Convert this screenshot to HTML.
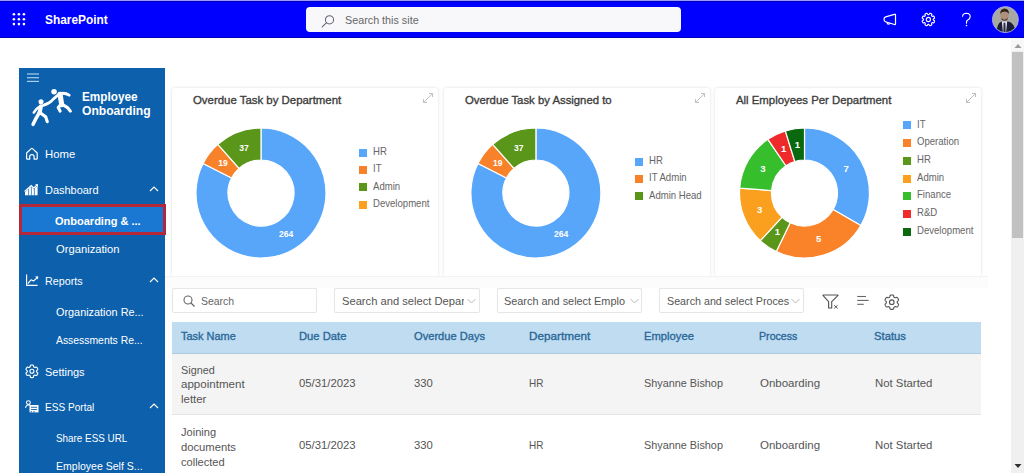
<!DOCTYPE html>
<html><head><meta charset="utf-8">
<style>
*{box-sizing:border-box;margin:0;padding:0}
html,body{width:1024px;height:473px;overflow:hidden;background:#fff;font-family:"Liberation Sans", sans-serif}
.abs{position:absolute}
.t{position:absolute;white-space:nowrap;line-height:1;transform-origin:0 0}
#topline{left:0;top:0;width:1024px;height:1px;background:#9a9af8}
#hdr{left:0;top:1px;width:1024px;height:37px;background:#0000ff;border-top:1px solid #0000c0;border-bottom:1px solid #0000b8}
.dot{position:absolute;width:2.5px;height:2.5px;background:#fff;border-radius:50%}
#search{left:306px;top:7px;width:375px;height:25px;background:#f8f8fa;border-radius:4px}
#side{left:19px;top:68px;width:146px;height:405px;background:#0c60ac}
.card{position:absolute;top:88px;width:266px;height:188px;background:#fff;box-shadow:0 0 3px rgba(0,0,0,.15);border-radius:2px}
.card svg text{font-family:"Liberation Sans", sans-serif;font-size:9.6px;font-weight:bold;fill:#fff;text-anchor:middle}
.sq{position:absolute;width:8px;height:8px}
#band{left:165px;top:276px;width:823px;height:12px;background:#fcfcfc;border-top:1px solid #f2f2f2}
.inp{position:absolute;top:288px;height:25px;border:1px solid #e6e6e6;background:#fff;border-radius:2px;box-shadow:0 0 1px rgba(0,0,0,.06)}
#thead{left:172px;top:322px;width:809px;height:32px;background:#bfdcf1;border-bottom:1px solid #acc9e0}
.row{position:absolute;left:172px;width:809px}
#sb{left:1011px;top:38px;width:13px;height:435px;background:#f0f0f0}
#thumb{left:1012px;top:52px;width:11px;height:186px;background:#c1c1c1}
</style></head><body>
<div class="abs" id="topline"></div>
<div class="abs" id="hdr"></div>
<svg class="abs" style="left:8px;top:8px" width="22" height="22" viewBox="8 8 22 22"><circle cx="13.90" cy="14.30" r="1.3" fill="#fff"/><circle cx="13.90" cy="19.20" r="1.3" fill="#fff"/><circle cx="13.90" cy="24.10" r="1.3" fill="#fff"/><circle cx="18.90" cy="14.30" r="1.3" fill="#fff"/><circle cx="18.90" cy="19.20" r="1.3" fill="#fff"/><circle cx="18.90" cy="24.10" r="1.3" fill="#fff"/><circle cx="23.90" cy="14.30" r="1.3" fill="#fff"/><circle cx="23.90" cy="19.20" r="1.3" fill="#fff"/><circle cx="23.90" cy="24.10" r="1.3" fill="#fff"/></svg><div class="t" style="left:44.7px;top:13.9px;font-size:12.8px;font-weight:bold;color:#fff;transform:scaleX(0.930);">SharePoint</div><div class="abs" id="search">
<svg class="abs" style="left:14px;top:7px" width="16" height="14" viewBox="0 0 16 14"><circle cx="9.5" cy="5.8" r="4.1" fill="none" stroke="#667" stroke-width="1.05"/><line x1="6.6" y1="8.7" x2="2.2" y2="12.8" stroke="#667" stroke-width="1.15" stroke-linecap="round"/></svg>
</div>
<div class="t" style="left:344.6px;top:14.6px;font-size:11px;color:#666;transform:scaleX(0.979);">Search this site</div><svg class="abs" style="left:880px;top:11px" width="20" height="17" viewBox="880 11 20 17">
<path d="M885.6 16.9 L894.4 14.3 Q895.5 14 895.5 15.1 L895.5 23.7 Q895.5 24.8 894.4 24.5 L885.6 21.7 Q884 21.2 884 19.3 Q884 17.4 885.6 16.9 Z" fill="none" stroke="#fff" stroke-width="1.2" stroke-linejoin="round"/>
<path d="M886.9 22.1 Q887 24.1 888.6 24.1 Q890 24.1 890.2 23.1" fill="none" stroke="#fff" stroke-width="1.1"/>
</svg>
<svg class="abs" style="left:918px;top:9px" width="21" height="21" viewBox="918 9 21 21"><path d="M928.40,14.58 L928.55,14.58 L928.71,14.58 L928.87,14.54 L929.04,14.41 L929.26,14.05 L929.53,13.57 L929.77,13.35 L929.99,13.33 L930.18,13.36 L930.38,13.41 L930.57,13.48 L930.76,13.55 L930.94,13.63 L931.12,13.71 L931.30,13.80 L931.48,13.90 L931.65,14.01 L931.78,14.18 L931.79,14.51 L931.64,15.04 L931.54,15.45 L931.57,15.66 L931.66,15.80 L931.77,15.91 L931.88,16.02 L931.99,16.13 L932.10,16.24 L932.24,16.33 L932.45,16.36 L932.86,16.26 L933.39,16.11 L933.72,16.12 L933.89,16.25 L934.00,16.42 L934.10,16.60 L934.19,16.78 L934.27,16.96 L934.35,17.14 L934.42,17.33 L934.49,17.52 L934.54,17.72 L934.57,17.91 L934.55,18.13 L934.33,18.37 L933.85,18.64 L933.49,18.86 L933.36,19.03 L933.32,19.19 L933.32,19.35 L933.32,19.50 L933.32,19.65 L933.32,19.81 L933.36,19.97 L933.49,20.14 L933.85,20.36 L934.33,20.63 L934.55,20.87 L934.57,21.09 L934.54,21.28 L934.49,21.48 L934.42,21.67 L934.35,21.86 L934.27,22.04 L934.19,22.22 L934.10,22.40 L934.00,22.58 L933.89,22.75 L933.72,22.88 L933.39,22.89 L932.86,22.74 L932.45,22.64 L932.24,22.67 L932.10,22.76 L931.99,22.87 L931.88,22.98 L931.77,23.09 L931.66,23.20 L931.57,23.34 L931.54,23.55 L931.64,23.96 L931.79,24.49 L931.78,24.82 L931.65,24.99 L931.48,25.10 L931.30,25.20 L931.12,25.29 L930.94,25.37 L930.76,25.45 L930.57,25.52 L930.38,25.59 L930.18,25.64 L929.99,25.67 L929.77,25.65 L929.53,25.43 L929.26,24.95 L929.04,24.59 L928.87,24.46 L928.71,24.42 L928.55,24.42 L928.40,24.42 L928.25,24.42 L928.09,24.42 L927.93,24.46 L927.76,24.59 L927.54,24.95 L927.27,25.43 L927.03,25.65 L926.81,25.67 L926.62,25.64 L926.42,25.59 L926.23,25.52 L926.04,25.45 L925.86,25.37 L925.68,25.29 L925.50,25.20 L925.32,25.10 L925.15,24.99 L925.02,24.82 L925.01,24.49 L925.16,23.96 L925.26,23.55 L925.23,23.34 L925.14,23.20 L925.03,23.09 L924.92,22.98 L924.81,22.87 L924.70,22.76 L924.56,22.67 L924.35,22.64 L923.94,22.74 L923.41,22.89 L923.08,22.88 L922.91,22.75 L922.80,22.58 L922.70,22.40 L922.61,22.22 L922.53,22.04 L922.45,21.86 L922.38,21.67 L922.31,21.48 L922.26,21.28 L922.23,21.09 L922.25,20.87 L922.47,20.63 L922.95,20.36 L923.31,20.14 L923.44,19.97 L923.48,19.81 L923.48,19.65 L923.48,19.50 L923.48,19.35 L923.48,19.19 L923.44,19.03 L923.31,18.86 L922.95,18.64 L922.47,18.37 L922.25,18.13 L922.23,17.91 L922.26,17.72 L922.31,17.52 L922.38,17.33 L922.45,17.14 L922.53,16.96 L922.61,16.78 L922.70,16.60 L922.80,16.42 L922.91,16.25 L923.08,16.12 L923.41,16.11 L923.94,16.26 L924.35,16.36 L924.56,16.33 L924.70,16.24 L924.81,16.13 L924.92,16.02 L925.03,15.91 L925.14,15.80 L925.23,15.66 L925.26,15.45 L925.16,15.04 L925.01,14.51 L925.02,14.18 L925.15,14.01 L925.32,13.90 L925.50,13.80 L925.68,13.71 L925.86,13.63 L926.04,13.55 L926.23,13.48 L926.42,13.41 L926.62,13.36 L926.81,13.33 L927.03,13.35 L927.27,13.57 L927.54,14.05 L927.76,14.41 L927.93,14.54 L928.09,14.58 L928.25,14.58 Z" fill="none" stroke="#fff" stroke-width="1.15" stroke-linejoin="round"/><circle cx="928.4" cy="19.5" r="2.1" fill="none" stroke="#fff" stroke-width="1.1"/></svg>
<svg class="abs" style="left:958px;top:10px" width="16" height="18" viewBox="958 10 16 18"><path d="M962.6 16.3 Q962.8 13.2 966.4 13.2 Q970.2 13.3 970.2 16.6 Q970.1 18.8 967.8 19.9 Q966.5 20.6 966.5 22 L966.5 23.2" fill="none" stroke="#fff" stroke-width="1.15" stroke-linecap="round"/><circle cx="966.5" cy="25.5" r="0.85" fill="#fff"/></svg>
<svg class="abs" style="left:990px;top:4px" width="31" height="31" viewBox="990 4 31 31">
<defs><clipPath id="av"><circle cx="1005.4" cy="19.6" r="13"/></clipPath></defs>
<g clip-path="url(#av)"><rect x="990" y="4" width="31" height="31" fill="#a8a8a2"/>
<path d="M996.5 33 Q997 23 1001.5 21.5 L1008 21.5 Q1014.5 22.5 1016 33 Z" fill="#1b2036"/>
<path d="M1001.8 21.2 L1007.2 21.2 L1006 33 L1003 33 Z" fill="#e4e4ea"/>
<path d="M1003.6 22.8 L1005.4 22.8 L1005.7 33 L1003.3 33 Z" fill="#2a2c44"/>
<ellipse cx="1004.5" cy="15.6" rx="4.1" ry="5.6" fill="#b08f7c"/>
<path d="M1000.2 14 Q1000 8.6 1004.6 8.4 Q1009.2 8.6 1008.9 14 Q1008 11.5 1004.6 11.4 Q1001.2 11.5 1000.2 14 Z" fill="#30261f"/>
<path d="M1001.5 17.8 Q1004.5 21.5 1007.6 17.8 L1007.6 19.5 Q1004.5 22 1001.5 19.5 Z" fill="#4a3a30"/>
</g><circle cx="1005.4" cy="19.6" r="13" fill="none" stroke="#a8a8f0" stroke-width="0.9"/></svg>
<div class="abs" id="side"><svg class="abs" style="left:8px;top:5px" width="12" height="10" viewBox="0 0 12 10"><g stroke="#a8d0f0" stroke-width="1.2"><line x1="0" y1="1" x2="12" y2="1"/><line x1="0" y1="4.7" x2="12" y2="4.7"/><line x1="0" y1="8.4" x2="12" y2="8.4"/></g></svg>
<svg class="abs" style="left:9px;top:18px" width="48" height="44" viewBox="0 0 516 473">
<g fill="none" stroke="#fff" stroke-linecap="round" stroke-linejoin="round">
<circle cx="280" cy="62" r="30" fill="#fff" stroke="none"/>
<circle cx="140" cy="170" r="27" fill="#fff" stroke="none"/>
<path d="M345 90 L362 200" stroke-width="55"/>
<path d="M335 82 Q400 68 442 98" stroke-width="32"/>
<path d="M322 98 Q275 135 245 168 Q215 190 180 202" stroke-width="30"/>
<path d="M352 200 L325 232 L345 270" stroke-width="34"/>
<path d="M372 200 L425 232 L455 270" stroke-width="34"/>
<path d="M138 220 L125 290" stroke-width="45"/>
<path d="M145 215 Q175 205 205 190" stroke-width="30"/>
<path d="M118 228 Q82 248 62 285" stroke-width="28"/>
<path d="M120 290 L85 350 L55 412" stroke-width="38"/>
<path d="M135 292 L190 330 L207 383" stroke-width="34"/>
</g></svg>
</div><div class="t" style="left:81.6px;top:90.8px;font-size:12.5px;font-weight:bold;color:#fff;transform:scaleX(0.941);">Employee</div><div class="t" style="left:81.6px;top:105.3px;font-size:12.5px;font-weight:bold;color:#fff;transform:scaleX(0.969);">Onboarding</div><div class="abs" style="left:19px;top:204px;width:147px;height:31px;background:#1b78d2;border:3px solid #b3283a"></div><div class="t" style="left:44.6px;top:149.2px;font-size:11.5px;color:#fff;transform:scaleX(0.984);">Home</div><div class="t" style="left:44.6px;top:184.8px;font-size:11.5px;color:#fff;transform:scaleX(0.953);">Dashboard</div><svg class="abs" style="left:149px;top:186.1px" width="10" height="6" viewBox="0 0 10 6"><path d="M1 5 L5 1 L9 5" fill="none" stroke="#fff" stroke-width="1.1"/></svg><div class="t" style="left:55.2px;top:215.7px;font-size:11.5px;font-weight:bold;color:#fff;transform:scaleX(0.957);">Onboarding &amp; ...</div><div class="t" style="left:55.6px;top:243.9px;font-size:11.5px;color:#fff;transform:scaleX(0.975);">Organization</div><div class="t" style="left:44.6px;top:275.6px;font-size:11.5px;color:#fff;transform:scaleX(0.933);">Reports</div><svg class="abs" style="left:149px;top:276.9px" width="10" height="6" viewBox="0 0 10 6"><path d="M1 5 L5 1 L9 5" fill="none" stroke="#fff" stroke-width="1.1"/></svg><div class="t" style="left:55.6px;top:307.2px;font-size:11.5px;color:#fff;transform:scaleX(0.945);">Organization Re...</div><div class="t" style="left:55.6px;top:335.2px;font-size:11.5px;color:#fff;transform:scaleX(0.903);">Assessments Re...</div><div class="t" style="left:44.6px;top:366.8px;font-size:11.5px;color:#fff;transform:scaleX(0.953);">Settings</div><div class="t" style="left:44.6px;top:401.6px;font-size:11.5px;color:#fff;transform:scaleX(0.876);">ESS Portal</div><svg class="abs" style="left:149px;top:402.9px" width="10" height="6" viewBox="0 0 10 6"><path d="M1 5 L5 1 L9 5" fill="none" stroke="#fff" stroke-width="1.1"/></svg><div class="t" style="left:55.6px;top:433.2px;font-size:11.5px;color:#fff;transform:scaleX(0.858);">Share ESS URL</div><div class="t" style="left:55.6px;top:461.2px;font-size:11.5px;color:#fff;transform:scaleX(0.915);">Employee Self S...</div><svg class="abs" style="left:22px;top:144px" width="20" height="20" viewBox="22 144 20 20"><path d="M26.6 153.6 Q26.6 153 27.1 152.5 L31.3 148.6 Q31.9 148.1 32.5 148.6 L36.7 152.5 Q37.2 153 37.2 153.6 L37.2 158.4 Q37.2 159.2 36.4 159.2 L34.1 159.2 L34.1 156.6 Q34.1 154.7 31.9 154.7 Q29.7 154.7 29.7 156.6 L29.7 159.2 L27.4 159.2 Q26.6 159.2 26.6 158.4 Z" fill="none" stroke="#fff" stroke-width="1.2" stroke-linejoin="round"/></svg>
<svg class="abs" style="left:22px;top:182px" width="18" height="15" viewBox="22 182 18 15"><path d="M25 195.3 L25 192.3 L31.2 186.6 L33.8 189.2 L36.2 186.8 L37.6 186.8 L37.6 195.3 Z" fill="#fff"/><path d="M24.6 191.6 L31.2 185.6 L33.8 188 L37.4 184.6" fill="none" stroke="#fff" stroke-width="1.3"/><path d="M35 184.2 L38 184.2 L38 187.2 Z" fill="#fff"/><g stroke="#0c60ac" stroke-width="0.7"><line x1="28.6" y1="189" x2="28.6" y2="195.5"/><line x1="31.4" y1="187" x2="31.4" y2="195.5"/><line x1="34.4" y1="188" x2="34.4" y2="195.5"/></g></svg>
<svg class="abs" style="left:22px;top:270px" width="20" height="20" viewBox="22 270 20 20"><path d="M26.6 274.4 L26.6 285.3 L37.6 285.3" fill="none" stroke="#fff" stroke-width="1.15" stroke-linejoin="round"/><path d="M27.9 283.6 L31 279.8 L33.5 281 L37 277.8" fill="none" stroke="#fff" stroke-width="1.15" stroke-linejoin="round"/><path d="M35 276.6 L38.3 276.2 L37.9 279.5 Z" fill="#fff"/></svg>
<svg class="abs" style="left:22px;top:361px" width="20" height="21" viewBox="22 361 20 21"><path d="M31.90,365.00 L32.10,365.00 L32.30,365.01 L32.49,365.03 L32.69,365.07 L32.88,365.11 L33.07,365.19 L33.24,365.31 L33.38,365.53 L33.48,365.85 L33.55,366.22 L33.61,366.55 L33.69,366.78 L33.79,366.94 L33.90,367.05 L34.02,367.14 L34.14,367.22 L34.27,367.29 L34.40,367.36 L34.53,367.43 L34.68,367.47 L34.85,367.50 L35.07,367.47 L35.36,367.38 L35.71,367.24 L36.06,367.14 L36.34,367.13 L36.55,367.20 L36.72,367.31 L36.86,367.45 L36.99,367.60 L37.11,367.76 L37.22,367.92 L37.32,368.09 L37.42,368.27 L37.51,368.44 L37.60,368.62 L37.67,368.80 L37.73,368.99 L37.77,369.19 L37.77,369.39 L37.69,369.62 L37.50,369.86 L37.22,370.11 L36.94,370.34 L36.75,370.53 L36.64,370.70 L36.59,370.86 L36.57,371.01 L36.56,371.15 L36.55,371.30 L36.56,371.45 L36.57,371.59 L36.59,371.74 L36.64,371.90 L36.75,372.07 L36.94,372.26 L37.22,372.49 L37.50,372.74 L37.69,372.98 L37.77,373.21 L37.77,373.41 L37.73,373.61 L37.67,373.80 L37.60,373.98 L37.51,374.16 L37.42,374.33 L37.32,374.51 L37.22,374.68 L37.11,374.84 L36.99,375.00 L36.86,375.15 L36.72,375.29 L36.55,375.40 L36.34,375.47 L36.06,375.46 L35.71,375.36 L35.36,375.22 L35.07,375.13 L34.85,375.10 L34.68,375.13 L34.53,375.17 L34.40,375.24 L34.27,375.31 L34.14,375.38 L34.02,375.46 L33.90,375.55 L33.79,375.66 L33.69,375.82 L33.61,376.05 L33.55,376.38 L33.48,376.75 L33.38,377.07 L33.24,377.29 L33.07,377.41 L32.88,377.49 L32.69,377.53 L32.49,377.57 L32.30,377.59 L32.10,377.60 L31.90,377.60 L31.70,377.60 L31.50,377.59 L31.31,377.57 L31.11,377.53 L30.92,377.49 L30.73,377.41 L30.56,377.29 L30.42,377.07 L30.32,376.75 L30.25,376.38 L30.19,376.05 L30.11,375.82 L30.01,375.66 L29.90,375.55 L29.78,375.46 L29.66,375.38 L29.53,375.31 L29.40,375.24 L29.27,375.17 L29.12,375.13 L28.95,375.10 L28.73,375.13 L28.44,375.22 L28.09,375.36 L27.74,375.46 L27.46,375.47 L27.25,375.40 L27.08,375.29 L26.94,375.15 L26.81,375.00 L26.69,374.84 L26.58,374.68 L26.48,374.51 L26.38,374.33 L26.29,374.16 L26.20,373.98 L26.13,373.80 L26.07,373.61 L26.03,373.41 L26.03,373.21 L26.11,372.98 L26.30,372.74 L26.58,372.49 L26.86,372.26 L27.05,372.07 L27.16,371.90 L27.21,371.74 L27.23,371.59 L27.24,371.45 L27.25,371.30 L27.24,371.15 L27.23,371.01 L27.21,370.86 L27.16,370.70 L27.05,370.53 L26.86,370.34 L26.58,370.11 L26.30,369.86 L26.11,369.62 L26.03,369.39 L26.03,369.19 L26.07,368.99 L26.13,368.80 L26.20,368.62 L26.29,368.44 L26.38,368.27 L26.48,368.09 L26.58,367.92 L26.69,367.76 L26.81,367.60 L26.94,367.45 L27.08,367.31 L27.25,367.20 L27.46,367.13 L27.74,367.14 L28.09,367.24 L28.44,367.38 L28.73,367.47 L28.95,367.50 L29.12,367.47 L29.27,367.43 L29.40,367.36 L29.53,367.29 L29.66,367.22 L29.78,367.14 L29.90,367.05 L30.01,366.94 L30.11,366.78 L30.19,366.55 L30.25,366.22 L30.32,365.85 L30.42,365.53 L30.56,365.31 L30.73,365.19 L30.92,365.11 L31.11,365.07 L31.31,365.03 L31.50,365.01 L31.70,365.00 Z" fill="none" stroke="#fff" stroke-width="1.15" stroke-linejoin="round"/><circle cx="31.9" cy="371.3" r="2" fill="none" stroke="#fff" stroke-width="1.1"/></svg>
<svg class="abs" style="left:22px;top:398px" width="19" height="17" viewBox="22 398 19 17"><g fill="none" stroke="#fff" stroke-width="1.1"><circle cx="28.4" cy="402.6" r="1.9"/><path d="M25.4 407.8 Q26.2 405 28.4 404.6 Q29.6 404.6 30.2 405.2"/></g><rect x="29.5" y="405" width="9" height="7.4" fill="#fff"/><g fill="#0c60ac"><rect x="31" y="406.8" width="6" height="0.9"/><rect x="31" y="409" width="6" height="0.9"/><rect x="30.6" y="411.2" width="1.2" height="1.2"/><rect x="33.4" y="411.2" width="1.2" height="1.2"/></g></svg>
<div class="card" style="left:172px"><svg class="abs" style="left:250px;top:4px" width="12" height="12" viewBox="0 0 12 12"><g fill="none" stroke="#b9b9b9" stroke-width="0.9"><path d="M1.5 10.5 L10.5 1.5"/><path d="M7 1.5 H10.5 V5"/><path d="M1.5 7 V10.5 H5"/></g></svg><svg class="abs" style="left:0;top:0" width="266" height="188" viewBox="0 0 266 188"><path d="M89.00,40.00A65,65 0 1 1 31.08,75.49L59.60,90.02A33,33 0 1 0 89.00,72.00Z" fill="#58a6fa" stroke="#fff" stroke-width="1.2"/>
<path d="M31.08,75.49A65,65 0 0 1 45.82,56.41L67.08,80.33A33,33 0 0 0 59.60,90.02Z" fill="#f8822a" stroke="#fff" stroke-width="1.2"/>
<path d="M45.82,56.41A65,65 0 0 1 89.00,40.00L89.00,72.00A33,33 0 0 0 67.08,80.33Z" fill="#5a9619" stroke="#fff" stroke-width="1.2"/>
<text x="114.2" y="148.7" textLength="14.2" lengthAdjust="spacingAndGlyphs">264</text>
<text x="50.9" y="78.1" textLength="9.5" lengthAdjust="spacingAndGlyphs">19</text>
<text x="71.9" y="62.5" textLength="9.5" lengthAdjust="spacingAndGlyphs">37</text></svg></div><div class="t" style="left:192.8px;top:94.1px;font-size:11.6px;-webkit-text-stroke:0.35px #3d3d3d;color:#3d3d3d;transform:scaleX(0.984);">Overdue Task by Department</div><div class="sq" style="left:359px;top:148.7px;background:#58a6fa"></div><div class="t" style="left:372.6px;top:146.9px;font-size:10.2px;color:#666;transform:scaleX(0.940);">HR</div><div class="sq" style="left:359px;top:166.0px;background:#f8822a"></div><div class="t" style="left:372.6px;top:164.2px;font-size:10.2px;color:#666;transform:scaleX(0.940);">IT</div><div class="sq" style="left:359px;top:183.3px;background:#5a9619"></div><div class="t" style="left:372.6px;top:181.5px;font-size:10.2px;color:#666;transform:scaleX(0.940);">Admin</div><div class="sq" style="left:359px;top:200.6px;background:#faa01e"></div><div class="t" style="left:372.6px;top:198.8px;font-size:10.2px;color:#666;transform:scaleX(0.940);">Development</div><div class="card" style="left:443.5px"><svg class="abs" style="left:250px;top:4px" width="12" height="12" viewBox="0 0 12 12"><g fill="none" stroke="#b9b9b9" stroke-width="0.9"><path d="M1.5 10.5 L10.5 1.5"/><path d="M7 1.5 H10.5 V5"/><path d="M1.5 7 V10.5 H5"/></g></svg><svg class="abs" style="left:0;top:0" width="266" height="188" viewBox="0 0 266 188"><path d="M91.90,40.00A65,65 0 1 1 33.98,75.49L62.50,90.02A33,33 0 1 0 91.90,72.00Z" fill="#58a6fa" stroke="#fff" stroke-width="1.2"/>
<path d="M33.98,75.49A65,65 0 0 1 48.72,56.41L69.98,80.33A33,33 0 0 0 62.50,90.02Z" fill="#f8822a" stroke="#fff" stroke-width="1.2"/>
<path d="M48.72,56.41A65,65 0 0 1 91.90,40.00L91.90,72.00A33,33 0 0 0 69.98,80.33Z" fill="#5a9619" stroke="#fff" stroke-width="1.2"/>
<text x="117.1" y="148.7" textLength="14.2" lengthAdjust="spacingAndGlyphs">264</text>
<text x="53.8" y="78.1" textLength="9.5" lengthAdjust="spacingAndGlyphs">19</text>
<text x="74.8" y="62.5" textLength="9.5" lengthAdjust="spacingAndGlyphs">37</text></svg></div><div class="t" style="left:464.6px;top:94.1px;font-size:11.6px;-webkit-text-stroke:0.35px #3d3d3d;color:#3d3d3d;transform:scaleX(0.978);">Overdue Task by Assigned to</div><div class="sq" style="left:635px;top:157.6px;background:#58a6fa"></div><div class="t" style="left:648.6px;top:155.8px;font-size:10.2px;color:#666;transform:scaleX(0.940);">HR</div><div class="sq" style="left:635px;top:175.0px;background:#f8822a"></div><div class="t" style="left:648.6px;top:173.2px;font-size:10.2px;color:#666;transform:scaleX(0.940);">IT Admin</div><div class="sq" style="left:635px;top:192.4px;background:#5a9619"></div><div class="t" style="left:648.6px;top:190.6px;font-size:10.2px;color:#666;transform:scaleX(0.940);">Admin Head</div><div class="card" style="left:715px"><svg class="abs" style="left:250px;top:4px" width="12" height="12" viewBox="0 0 12 12"><g fill="none" stroke="#b9b9b9" stroke-width="0.9"><path d="M1.5 10.5 L10.5 1.5"/><path d="M7 1.5 H10.5 V5"/><path d="M1.5 7 V10.5 H5"/></g></svg><svg class="abs" style="left:0;top:0" width="266" height="188" viewBox="0 0 266 188"><path d="M89.50,40.00A65,65 0 0 1 145.79,137.50L118.08,121.50A33,33 0 0 0 89.50,72.00Z" fill="#58a6fa" stroke="#fff" stroke-width="1.2"/>
<path d="M145.79,137.50A65,65 0 0 1 61.30,163.56L75.18,134.73A33,33 0 0 0 118.08,121.50Z" fill="#fa8228" stroke="#fff" stroke-width="1.2"/>
<path d="M61.30,163.56A65,65 0 0 1 45.29,152.65L67.05,129.19A33,33 0 0 0 75.18,134.73Z" fill="#5a9619" stroke="#fff" stroke-width="1.2"/>
<path d="M45.29,152.65A65,65 0 0 1 24.68,100.14L56.59,102.53A33,33 0 0 0 67.05,129.19Z" fill="#faa01e" stroke="#fff" stroke-width="1.2"/>
<path d="M24.68,100.14A65,65 0 0 1 52.88,51.29L70.91,77.73A33,33 0 0 0 56.59,102.53Z" fill="#37be2d" stroke="#fff" stroke-width="1.2"/>
<path d="M52.88,51.29A65,65 0 0 1 70.34,42.89L79.77,73.47A33,33 0 0 0 70.91,77.73Z" fill="#ee2a2a" stroke="#fff" stroke-width="1.2"/>
<path d="M70.34,42.89A65,65 0 0 1 89.50,40.00L89.50,72.00A33,33 0 0 0 79.77,73.47Z" fill="#0a690f" stroke="#fff" stroke-width="1.2"/>
<text x="131.2" y="83.5">7</text>
<text x="103.7" y="153.7">5</text>
<text x="62.3" y="147.4">1</text>
<text x="44.6" y="125.2">3</text>
<text x="47.8" y="83.5">3</text>
<text x="68.6" y="64.2">1</text>
<text x="82.3" y="59.9">1</text></svg></div><div class="t" style="left:736.3px;top:94.1px;font-size:11.6px;-webkit-text-stroke:0.35px #3d3d3d;color:#3d3d3d;transform:scaleX(0.980);">All Employees Per Department</div><div class="sq" style="left:903px;top:121.4px;background:#58a6fa"></div><div class="t" style="left:916.6px;top:119.6px;font-size:10.2px;color:#666;transform:scaleX(0.940);">IT</div><div class="sq" style="left:903px;top:139.1px;background:#fa8228"></div><div class="t" style="left:916.6px;top:137.3px;font-size:10.2px;color:#666;transform:scaleX(0.940);">Operation</div><div class="sq" style="left:903px;top:156.8px;background:#5a9619"></div><div class="t" style="left:916.6px;top:155.0px;font-size:10.2px;color:#666;transform:scaleX(0.940);">HR</div><div class="sq" style="left:903px;top:174.5px;background:#faa01e"></div><div class="t" style="left:916.6px;top:172.7px;font-size:10.2px;color:#666;transform:scaleX(0.940);">Admin</div><div class="sq" style="left:903px;top:192.2px;background:#37be2d"></div><div class="t" style="left:916.6px;top:190.4px;font-size:10.2px;color:#666;transform:scaleX(0.940);">Finance</div><div class="sq" style="left:903px;top:209.9px;background:#ee2a2a"></div><div class="t" style="left:916.6px;top:208.1px;font-size:10.2px;color:#666;transform:scaleX(0.940);">R&amp;D</div><div class="sq" style="left:903px;top:227.6px;background:#0a690f"></div><div class="t" style="left:916.6px;top:225.8px;font-size:10.2px;color:#666;transform:scaleX(0.940);">Development</div><div class="abs" id="band"></div><div class="inp" style="left:172px;width:145px"><svg class="abs" style="left:10px;top:6px" width="12" height="12" viewBox="0 0 12 12"><circle cx="5" cy="5" r="4" fill="none" stroke="#666" stroke-width="1.1"/><line x1="8" y1="8" x2="11.5" y2="11.5" stroke="#666" stroke-width="1.2"/></svg></div>
<div class="t" style="left:200.6px;top:296.4px;font-size:11px;color:#666;transform:scaleX(0.950);">Search</div><div class="inp" style="left:334px;width:146px"></div><div class="t" style="left:342.2px;top:296.1px;font-size:11px;color:#555;transform:scaleX(1.015);">Search and select Depart</div><div class="abs" style="left:464px;top:290px;width:15.0px;height:21px;background:#fff"></div><svg class="abs" style="left:467px;top:298px" width="9" height="6" viewBox="0 0 9 6"><path d="M0.5 1 L4.5 5 L8.5 1" fill="none" stroke="#b5b5b5" stroke-width="1"/></svg><div class="inp" style="left:497px;width:145px"></div><div class="t" style="left:504.2px;top:296.1px;font-size:11px;color:#555;transform:scaleX(0.989);">Search and select Emplo</div><div class="abs" style="left:627.5px;top:290px;width:13.5px;height:21px;background:#fff"></div><svg class="abs" style="left:629.6px;top:298px" width="9" height="6" viewBox="0 0 9 6"><path d="M0.5 1 L4.5 5 L8.5 1" fill="none" stroke="#b5b5b5" stroke-width="1"/></svg><div class="inp" style="left:659px;width:145px"></div><div class="t" style="left:666.6px;top:296.1px;font-size:11px;color:#555;transform:scaleX(0.974);">Search and select Proces</div><div class="abs" style="left:789.5px;top:290px;width:13.5px;height:21px;background:#fff"></div><svg class="abs" style="left:791px;top:298px" width="9" height="6" viewBox="0 0 9 6"><path d="M0.5 1 L4.5 5 L8.5 1" fill="none" stroke="#b5b5b5" stroke-width="1"/></svg><svg class="abs" style="left:815px;top:288px" width="90" height="27" viewBox="815 288 90 27">
<path d="M823.2 295.6 Q822.6 295 823.4 295 L837.6 295 Q838.4 295 837.8 295.6 L831.7 301.6 L831.7 308 L828.6 308 L828.6 301.6 Z" fill="none" stroke="#555" stroke-width="1.15" stroke-linejoin="round"/>
<path d="M834.2 305.2 L837.6 308.4 M837.6 305.2 L834.2 308.4" stroke="#555" stroke-width="1"/>
<g stroke="#666" stroke-width="1.1"><line x1="857.2" y1="296.5" x2="866" y2="296.5"/><line x1="857.2" y1="300.4" x2="868.6" y2="300.4"/><line x1="857.2" y1="304.3" x2="863.8" y2="304.3"/></g>
<path d="M891.80,295.00 L892.03,295.00 L892.25,295.02 L892.48,295.04 L892.70,295.07 L892.92,295.13 L893.13,295.21 L893.33,295.34 L893.50,295.57 L893.63,295.92 L893.71,296.32 L893.79,296.67 L893.89,296.93 L894.01,297.10 L894.14,297.22 L894.28,297.32 L894.43,297.42 L894.58,297.50 L894.73,297.58 L894.89,297.66 L895.05,297.72 L895.25,297.75 L895.49,297.74 L895.81,297.65 L896.20,297.52 L896.58,297.42 L896.89,297.42 L897.12,297.51 L897.31,297.64 L897.47,297.80 L897.62,297.97 L897.75,298.16 L897.88,298.34 L898.00,298.53 L898.11,298.73 L898.21,298.93 L898.31,299.14 L898.40,299.35 L898.47,299.56 L898.52,299.78 L898.52,300.02 L898.44,300.27 L898.24,300.55 L897.95,300.83 L897.66,301.08 L897.46,301.30 L897.35,301.50 L897.29,301.68 L897.27,301.86 L897.26,302.03 L897.26,302.20 L897.26,302.37 L897.27,302.54 L897.29,302.72 L897.35,302.90 L897.46,303.10 L897.66,303.32 L897.95,303.57 L898.24,303.85 L898.44,304.13 L898.52,304.38 L898.52,304.62 L898.47,304.84 L898.40,305.05 L898.31,305.26 L898.21,305.47 L898.11,305.67 L898.00,305.87 L897.88,306.06 L897.75,306.24 L897.62,306.43 L897.47,306.60 L897.31,306.76 L897.12,306.89 L896.89,306.98 L896.58,306.98 L896.20,306.88 L895.81,306.75 L895.49,306.66 L895.25,306.65 L895.05,306.68 L894.89,306.74 L894.73,306.82 L894.58,306.90 L894.43,306.98 L894.28,307.08 L894.14,307.18 L894.01,307.30 L893.89,307.47 L893.79,307.73 L893.71,308.08 L893.63,308.48 L893.50,308.83 L893.33,309.06 L893.13,309.19 L892.92,309.27 L892.70,309.33 L892.48,309.36 L892.25,309.38 L892.03,309.40 L891.80,309.40 L891.57,309.40 L891.35,309.38 L891.12,309.36 L890.90,309.33 L890.68,309.27 L890.47,309.19 L890.27,309.06 L890.10,308.83 L889.97,308.48 L889.89,308.08 L889.81,307.73 L889.71,307.47 L889.59,307.30 L889.46,307.18 L889.32,307.08 L889.17,306.98 L889.02,306.90 L888.87,306.82 L888.71,306.74 L888.55,306.68 L888.35,306.65 L888.11,306.66 L887.79,306.75 L887.40,306.88 L887.02,306.98 L886.71,306.98 L886.48,306.89 L886.29,306.76 L886.13,306.60 L885.98,306.43 L885.85,306.24 L885.72,306.06 L885.60,305.87 L885.49,305.67 L885.39,305.47 L885.29,305.26 L885.20,305.05 L885.13,304.84 L885.08,304.62 L885.08,304.38 L885.16,304.13 L885.36,303.85 L885.65,303.57 L885.94,303.32 L886.14,303.10 L886.25,302.90 L886.31,302.72 L886.33,302.54 L886.34,302.37 L886.34,302.20 L886.34,302.03 L886.33,301.86 L886.31,301.68 L886.25,301.50 L886.14,301.30 L885.94,301.08 L885.65,300.83 L885.36,300.55 L885.16,300.27 L885.08,300.02 L885.08,299.78 L885.13,299.56 L885.20,299.35 L885.29,299.14 L885.39,298.93 L885.49,298.73 L885.60,298.53 L885.72,298.34 L885.85,298.16 L885.98,297.97 L886.13,297.80 L886.29,297.64 L886.48,297.51 L886.71,297.42 L887.02,297.42 L887.40,297.52 L887.79,297.65 L888.11,297.74 L888.35,297.75 L888.55,297.72 L888.71,297.66 L888.87,297.58 L889.02,297.50 L889.17,297.42 L889.32,297.32 L889.46,297.22 L889.59,297.10 L889.71,296.93 L889.81,296.67 L889.89,296.32 L889.97,295.92 L890.10,295.57 L890.27,295.34 L890.47,295.21 L890.68,295.13 L890.90,295.07 L891.12,295.04 L891.35,295.02 L891.57,295.00 Z" fill="none" stroke="#555" stroke-width="1.15" stroke-linejoin="round"/><circle cx="891.8" cy="302.2" r="2.3" fill="none" stroke="#555" stroke-width="1.1"/>
</svg>
<div class="abs" id="thead"></div><div class="t" style="left:181.3px;top:330.9px;font-size:11.5px;-webkit-text-stroke:0.35px #2a6898;color:#2a6898;transform:scaleX(0.953);">Task Name</div><div class="t" style="left:298.5px;top:330.9px;font-size:11.5px;-webkit-text-stroke:0.35px #2a6898;color:#2a6898;transform:scaleX(0.977);">Due Date</div><div class="t" style="left:413.6px;top:330.9px;font-size:11.5px;-webkit-text-stroke:0.35px #2a6898;color:#2a6898;transform:scaleX(0.967);">Overdue Days</div><div class="t" style="left:529.0px;top:330.9px;font-size:11.5px;-webkit-text-stroke:0.35px #2a6898;color:#2a6898;transform:scaleX(1.018);">Department</div><div class="t" style="left:644.2px;top:330.9px;font-size:11.5px;-webkit-text-stroke:0.35px #2a6898;color:#2a6898;transform:scaleX(0.976);">Employee</div><div class="t" style="left:759.4px;top:330.9px;font-size:11.5px;-webkit-text-stroke:0.35px #2a6898;color:#2a6898;transform:scaleX(0.924);">Process</div><div class="t" style="left:874.3px;top:330.9px;font-size:11.5px;-webkit-text-stroke:0.35px #2a6898;color:#2a6898;transform:scaleX(0.978);">Status</div><div class="row" style="top:354px;height:61px;background:#f4f4f4;border-bottom:1px solid #e4e4e4"></div><div class="row" style="top:416px;height:57px;background:#fff"></div><div class="t" style="left:181.4px;top:364.6px;font-size:11px;color:#555;transform:scaleX(0.986);">Signed</div><div class="t" style="left:181.4px;top:379.1px;font-size:11px;color:#555;transform:scaleX(1.052);">appointment</div><div class="t" style="left:181.4px;top:393.6px;font-size:11px;color:#555;transform:scaleX(1.038);">letter</div><div class="t" style="left:298.6px;top:378.3px;font-size:11px;color:#555;transform:scaleX(1.028);">05/31/2023</div><div class="t" style="left:413.6px;top:378.3px;font-size:11px;color:#555;transform:scaleX(1.024);">330</div><div class="t" style="left:529.4px;top:378.3px;font-size:11px;color:#555;transform:scaleX(0.906);">HR</div><div class="t" style="left:644.2px;top:378.3px;font-size:11px;color:#555;transform:scaleX(0.985);">Shyanne Bishop</div><div class="t" style="left:759.6px;top:378.3px;font-size:11px;color:#555;transform:scaleX(1.045);">Onboarding</div><div class="t" style="left:874.8px;top:378.3px;font-size:11px;color:#555;transform:scaleX(1.032);">Not Started</div><div class="t" style="left:181.4px;top:426.6px;font-size:11px;color:#555;transform:scaleX(1.007);">Joining</div><div class="t" style="left:181.4px;top:441.6px;font-size:11px;color:#555;transform:scaleX(1.020);">documents</div><div class="t" style="left:181.4px;top:456.6px;font-size:11px;color:#555;transform:scaleX(1.006);">collected</div><div class="t" style="left:298.6px;top:440.3px;font-size:11px;color:#555;transform:scaleX(1.028);">05/31/2023</div><div class="t" style="left:413.6px;top:440.3px;font-size:11px;color:#555;transform:scaleX(1.024);">330</div><div class="t" style="left:529.4px;top:440.3px;font-size:11px;color:#555;transform:scaleX(0.906);">HR</div><div class="t" style="left:644.2px;top:440.3px;font-size:11px;color:#555;transform:scaleX(0.985);">Shyanne Bishop</div><div class="t" style="left:759.6px;top:440.3px;font-size:11px;color:#555;transform:scaleX(1.045);">Onboarding</div><div class="t" style="left:874.8px;top:440.3px;font-size:11px;color:#555;transform:scaleX(1.032);">Not Started</div><div class="abs" id="sb"></div><div class="abs" style="left:1011px;top:38px;width:13px;height:13px;background:#f7f7f7"></div><div class="abs" id="thumb"></div>
<svg class="abs" style="left:1014px;top:43px" width="8" height="6" viewBox="0 0 8 6"><path d="M0.5 5 L4 1 L7.5 5 Z" fill="#9a9a9a"/></svg>
<svg class="abs" style="left:1014px;top:463px" width="8" height="6" viewBox="0 0 8 6"><path d="M0.5 1 L4 5 L7.5 1 Z" fill="#303030"/></svg>
</body></html>
